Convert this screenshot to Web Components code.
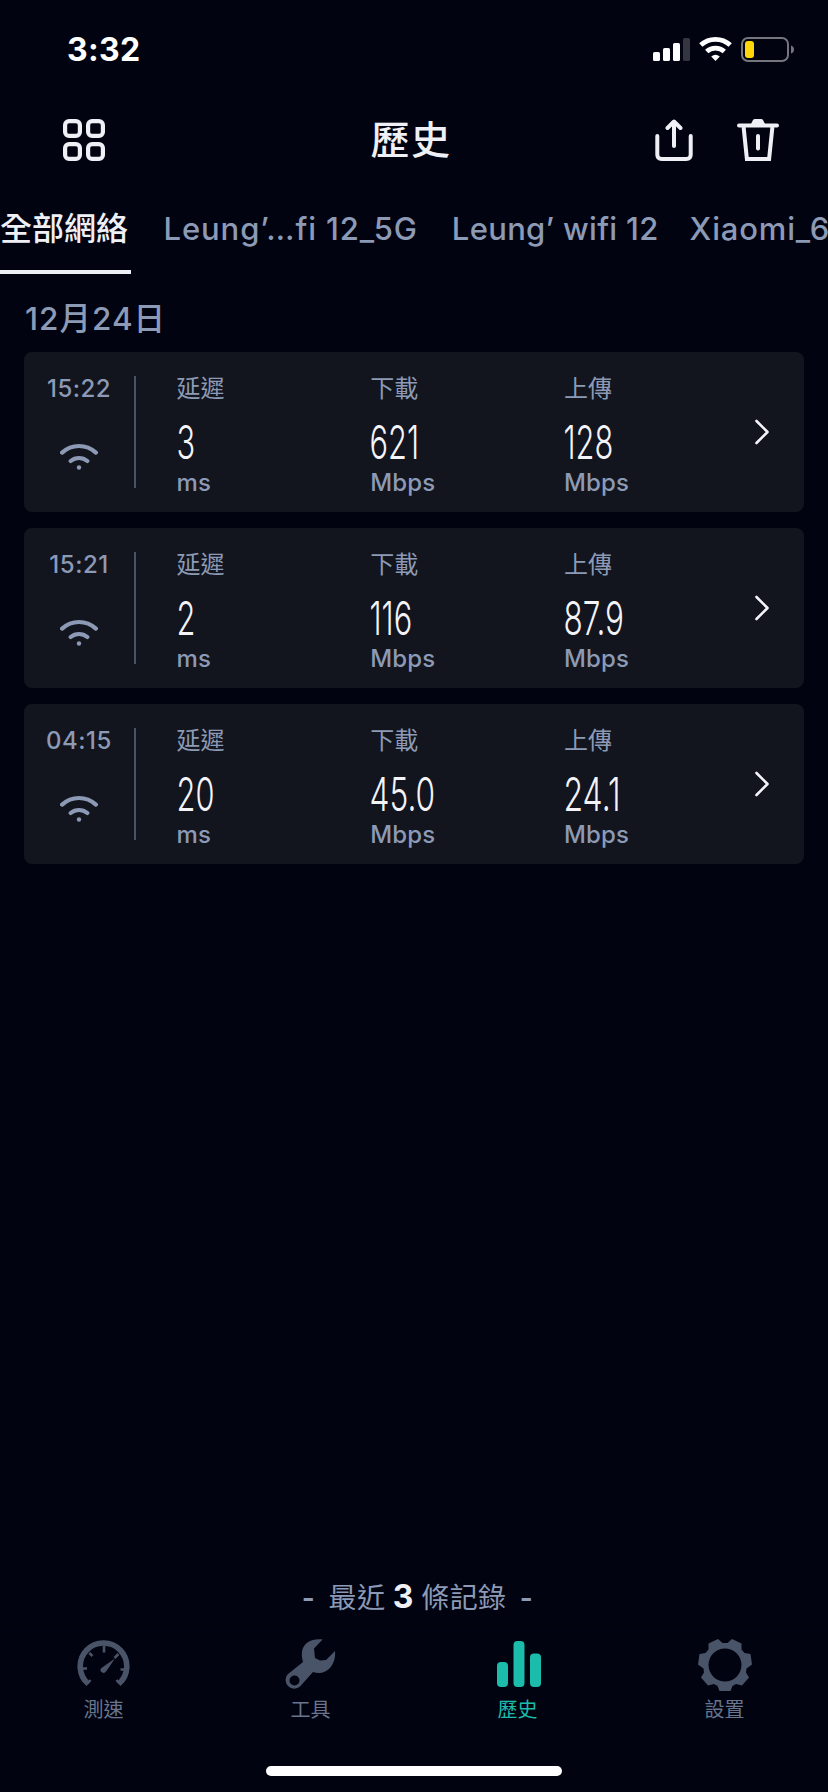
<!DOCTYPE html>
<html lang="zh-Hant">
<head>
<meta charset="utf-8">
<meta name="viewport" content="width=device-width">
<title>歷史</title>
<style>
html,body{margin:0;padding:0;background:#010311}
body{width:828px;height:1792px;overflow:hidden;font-family:Inter,"Noto Sans CJK TC",sans-serif;color:#8c9ab5}
</style>
</head>
<body>
<history-app></history-app>
<script>
const define = (name, html) => {
  const template = document.createElement('template');
  template.innerHTML = html;
  customElements.define(name, class extends HTMLElement {
    constructor() {
      super();
      this.attachShadow({ mode: 'open' }).append(template.content.cloneNode(true));
    }
  });
};

define('status-bar', `
<style>
:host{display:flex;justify-content:space-between;height:100px;box-sizing:border-box;padding:30px 34px 0 67px;color:#fff}
.time{font-size:32px;font-weight:750;line-height:39px;letter-spacing:.3px}
svg{display:block;margin-top:6px}
</style>
<span class="time">3:32</span>
<svg width="142" height="28" viewBox="0 0 142 28" fill="#fff">
  <rect x="1" y="16" width="7" height="9" rx="1.6"/><rect x="11" y="12" width="7" height="13" rx="1.6"/>
  <rect x="21" y="7" width="7" height="18" rx="1.6"/><rect x="31" y="2" width="7" height="23" rx="1.6" opacity=".2"/>
  <g fill="none" stroke="#fff" stroke-width="4.8"><path d="M48.8 9.1A21.5 21.5 0 0 1 78.2 9.1"/><path d="M54.7 15.5A13 13 0 0 1 72.3 15.5"/></g>
  <path d="M63.5 25 59.2 20.6Q63.500 16.800 67.800 20.600Z"/>
  <rect x="90" y="2" width="46" height="23" rx="6" fill="none" stroke="#74757d" stroke-width="2"/>
  <rect x="93" y="5" width="9" height="17" rx="3" fill="#ffd60a"/>
  <path d="M139 9.500Q142 10.500 142 13.500T139 17.500Z" fill="#74757d"/>
</svg>`);

define('nav-header', `
<style>
:host{display:grid;grid-template-columns:1fr auto 1fr;height:100px;padding:0 49px 0 63px;box-sizing:border-box;color:#efeff6}
svg{display:block;margin-top:19px}
.title{font-size:39px;font-weight:500;line-height:80px;letter-spacing:1.500px;margin-left:-20px}
.actions{display:flex;justify-content:flex-end;gap:43px}
</style>
<svg width="42" height="42" viewBox="0 0 42 42" fill="none" stroke="#efeff6" stroke-width="4.200">
  <rect x="2.100" y="2.100" width="14.800" height="14.800" rx="4"/><rect x="25.100" y="2.100" width="14.800" height="14.800" rx="4"/>
  <rect x="2.100" y="25.100" width="14.800" height="14.800" rx="4"/><rect x="25.100" y="25.100" width="14.800" height="14.800" rx="4"/>
</svg>
<span class="title">歷史</span>
<div class="actions">
  <svg width="40" height="42" viewBox="0 0 40 42" fill="none" stroke="#efeff6" stroke-width="4" stroke-linecap="round" stroke-linejoin="round">
    <path d="M3.300 17V35.500Q3.300 40 7.800 40H32.200Q36.700 40 36.700 35.500V17M20 27V3M13.500 9 20 2.500 26.500 9"/>
  </svg>
  <svg width="42" height="42" viewBox="0 0 42 42" fill="none" stroke="#efeff6" stroke-width="4" stroke-linecap="round">
    <path d="M2 6.600H40"/><path d="M13.500 6 16 1Q16.500 0 18 0H24Q25.500 0 26 1L28.500 6Z" stroke="none" fill="#efeff6"/>
    <path d="M6.600 8 9.900 40H32.100L35.400 8" stroke-linecap="butt"/><path d="M21 17V29.500"/>
  </svg>
</div>`);

define('network-tabs', `
<style>
:host{display:flex;height:74px;overflow:hidden;white-space:nowrap;font-size:31px;font-weight:550}
slot{display:flex}
::slotted(*){flex:none;line-height:58px}
</style><slot></slot>`);

define('network-tab', `
<style>
:host{display:block;margin-left:var(--lead,0);letter-spacing:var(--track,0)}
:host([active]){color:#efeff6;border-bottom:4px solid #efeff6;width:131px;height:70px;box-sizing:content-box;font-size:32px;font-weight:500}
</style><slot></slot>`);

define('wifi-mark', `
<style>:host{display:block}svg{display:block}</style>
<svg width="38" height="29" viewBox="0 0 38 29" fill="none" stroke="#8c9ab5" stroke-width="4.200" stroke-linecap="round">
  <path d="M2.100 10.600A25 25 0 0 1 35.900 10.600M10.700 19A13 13 0 0 1 27.300 19"/><circle cx="19" cy="25.500" r="2.200" fill="#8c9ab5" stroke="none"/>
</svg>`);

define('metric-cell', `
<style>
:host{display:block;flex:none;width:193.800px;font-size:24px}
.label{line-height:30px;height:40px}
.value{height:54px;line-height:56px;font-size:47px;color:#f3f3f8;white-space:nowrap}
.value div{width:max-content;transform-origin:0 50%;font-weight:275;transform:translateX(-.5px) scaleX(var(--squeeze,.655))}
.unit{font-weight:550;line-height:30px;letter-spacing:.1px}
</style>
<div class="label"><slot name="label"></slot></div>
<div class="value"><div><slot></slot></div></div>
<div class="unit"><slot name="unit"></slot></div>`);

define('result-card', `
<style>
:host{display:flex;height:160px;background:#12141e;border-radius:8px;box-sizing:border-box;padding-top:24px}
.when{flex:none;width:110px;height:112px;border-right:2px solid #48536a;display:flex;flex-direction:column;align-items:center;font-size:24px;font-weight:550;letter-spacing:.5px}
.when span{line-height:25px;height:66px}
.metrics{display:flex;width:560px;margin-left:40.500px;margin-top:-2px}
.go{margin:43px 0 0 auto;padding-right:34px}
.go svg{display:block}
</style>
<div class="when"><span><slot name="time"></slot></span><wifi-mark></wifi-mark></div>
<div class="metrics"><slot></slot></div>
<div class="go"><svg width="16" height="26" viewBox="0 0 16 26" fill="none" stroke="#f3f3f8" stroke-width="2.600" stroke-linecap="round" stroke-linejoin="round"><path d="M2.500 2 13.500 13 2.500 24"/></svg></div>`);

define('tab-item', `
<style>
:host{display:flex;flex:1;flex-direction:column;align-items:center;font-size:20px;color:#69758c}
:host([active]){color:#1bbcab}
.icon{height:59px;display:flex}
.text{line-height:26px}
</style>
<div class="icon"><slot name="icon"></slot></div><div class="text"><slot></slot></div>`);

define('home-indicator', `
<style>:host{display:block;width:296px;height:10px;border-radius:5px;background:#fff;margin:0 auto}</style>`);

define('history-app', `
<style>
:host{display:flex;flex-direction:column;width:828px;height:1792px}
.date{font-size:31.500px;font-weight:550;line-height:40px;height:53px;padding:25px 0 0 25px;letter-spacing:1px}
.cards{display:flex;flex-direction:column;gap:16px;padding:0 24px}
.count{margin-top:auto;height:51px;padding-left:7px;display:flex;justify-content:center;align-items:baseline;font-size:28px;font-weight:600;line-height:48px;white-space:pre;letter-spacing:.4px;word-spacing:-.8px}
.count span{font-weight:400}
.count b{font-size:32px;color:#efeff6;font-weight:700}
nav{display:flex;height:142px;box-sizing:border-box;border-top:1px solid #02020a;padding-top:13px}
</style>
<status-bar></status-bar>
<nav-header></nav-header>
<network-tabs>
  <network-tab active>全部網絡</network-tab>
  <network-tab style="--lead:32.500px;--track:.900px">Leung’…fi 12_5G</network-tab>
  <network-tab style="--lead:34px;--track:.300px">Leung’ wifi 12</network-tab>
  <network-tab style="--lead:31px;--track:.850px">Xiaomi_6</network-tab>
</network-tabs>
<div class="date">12月24日</div>
<div class="cards">
  <result-card><span slot="time">15:22</span>
    <metric-cell><span slot="label">延遲</span>3<span slot="unit">ms</span></metric-cell>
    <metric-cell><span slot="label">下載</span>621<span slot="unit">Mbps</span></metric-cell>
    <metric-cell><span slot="label">上傳</span>128<span slot="unit">Mbps</span></metric-cell></result-card>
  <result-card><span slot="time">15:21</span>
    <metric-cell><span slot="label">延遲</span>2<span slot="unit">ms</span></metric-cell>
    <metric-cell><span slot="label">下載</span>116<span slot="unit">Mbps</span></metric-cell>
    <metric-cell style="--squeeze:.67"><span slot="label">上傳</span>87.9<span slot="unit">Mbps</span></metric-cell></result-card>
  <result-card><span slot="time">04:15</span>
    <metric-cell><span slot="label">延遲</span>20<span slot="unit">ms</span></metric-cell>
    <metric-cell style="--squeeze:.675"><span slot="label">下載</span>45.0<span slot="unit">Mbps</span></metric-cell>
    <metric-cell style="--squeeze:.68"><span slot="label">上傳</span>24.1<span slot="unit">Mbps</span></metric-cell></result-card>
</div>
<div class="count">-  <span>最近 </span><b>3</b><span> 條記錄</span>  -</div>
<nav>
  <tab-item><svg slot="icon" width="54" height="54" viewBox="0 0 54 54" fill="none" stroke="#4a5468">
    <path d="M11.300 46A23.300 23.300 0 1 1 41.700 46" stroke-width="5.600"/>
    <path d="M27 8V14.500M12.300 15 15.500 18M4.500 30.500H10M43.500 31.500H48.500M37.500 20 41.500 16M10.500 45.500 13.500 42M42.500 45.500 39.500 42" stroke-width="2.600"/>
    <path d="M38 20.500 29 33.500A2.900 2.900 0 0 1 24.100 30.200Z" fill="#4a5468" stroke="none"/>
  </svg>測速</tab-item>
  <tab-item><svg slot="icon" width="54" height="54" viewBox="1 0 54 54" fill="#4a5468">
    <path fill-rule="evenodd" d="M39.600 1.500 31 10.500 32 20 37 22.500 43 22 52 13C53.500 27 43 38.500 30 34L17 48.500A8.700 8.700 0 0 1 4.500 36.500L20 24C15.500 9 24 0 39.600 1.500ZM11.500 37.500A5 5 0 1 0 11.500 47.500A5 5 0 1 0 11.500 37.500Z"/>
  </svg>工具</tab-item>
  <tab-item active><svg slot="icon" width="54" height="54" viewBox="0 0 54 54" fill="#1bbcab">
    <rect x="6" y="24" width="11" height="25" rx="4"/><rect x="22.500" y="3" width="11" height="46" rx="4"/><rect x="39" y="15.500" width="11" height="33.500" rx="4"/>
  </svg>歷史</tab-item>
  <tab-item><svg slot="icon" width="54" height="54" viewBox="0 0 54 54" fill="#4a5468">
    <path fill-rule="evenodd" d="M20 1 24.500 5H29.500L34 1 43.500 5.500V11.500L46.500 15 52.500 16 54 26.500 48.500 30.500 48 34.500 51 39.500 44 47.500 38 46 34.500 48 32.500 53H21.500L19.500 48 16 46 10 47.500 3 39.500 6 34.500 5.500 30.500 0 26.500 1.500 16 7.500 15 10.500 11.500V5.500ZM27 10.500A16.500 16.500 0 1 0 27 43.500A16.500 16.500 0 1 0 27 10.500Z"/>
  </svg>設置</tab-item>
</nav>
<home-indicator style="margin-bottom:16px"></home-indicator>`);
</script>
</body>
</html>
